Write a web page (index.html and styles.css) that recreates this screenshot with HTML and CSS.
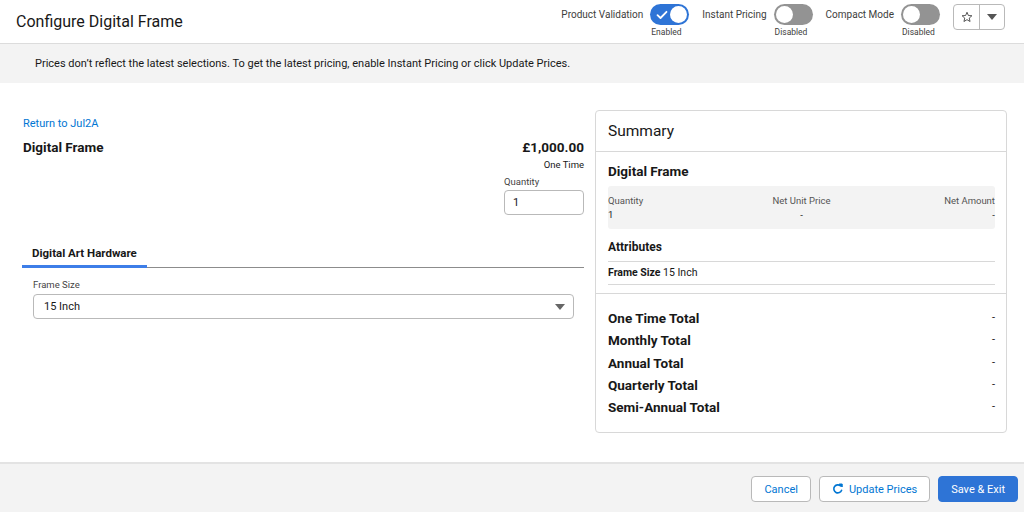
FILE: index.html
```html
<!DOCTYPE html>
<html lang="en">

<head>
    <meta charset="UTF-8">
    <meta name="viewport" content="width=device-width, initial-scale=1.0">
    <title>Configure Digital Frame</title>
    <link rel="stylesheet" href="styles.css">
</head>

<body>
    <div class="header">
        <div class="title">Configure Digital Frame</div>
        <div class="controls">
            <div class="opt">
                <span class="opt_label">Product Validation</span>
                <div class="opt_col">
                    <span class="toggle on">
                        <svg class="check" width="12" height="10" viewBox="0 0 12 10"><path d="M1.5 5.2 L4.5 8 L10.5 1.8" fill="none" stroke="#fff" stroke-width="1.8" stroke-linecap="round" stroke-linejoin="round"/></svg>
                        <span class="knob"></span>
                    </span>
                    <span class="opt_state">Enabled</span>
                </div>
            </div>
            <div class="opt">
                <span class="opt_label">Instant Pricing</span>
                <div class="opt_col">
                    <span class="toggle"><span class="knob"></span></span>
                    <span class="opt_state">Disabled</span>
                </div>
            </div>
            <div class="opt">
                <span class="opt_label">Compact Mode</span>
                <div class="opt_col">
                    <span class="toggle"><span class="knob"></span></span>
                    <span class="opt_state">Disabled</span>
                </div>
            </div>
            <div class="btn_group">
                <span class="icon_btn">
                    <svg width="12" height="12" viewBox="0 0 24 24"><path d="M12 2.5 L14.8 9 L21.8 9.5 L16.5 14.1 L18.1 21 L12 17.3 L5.9 21 L7.5 14.1 L2.2 9.5 L9.2 9 Z" fill="none" stroke="#444" stroke-width="1.8" stroke-linejoin="round"/></svg>
                </span>
                <span class="icon_btn">
                    <svg width="10" height="6" viewBox="0 0 10 6"><path d="M0 0 L10 0 L5 6 Z" fill="#555"/></svg>
                </span>
            </div>
        </div>
    </div>

    <div class="banner">Prices don’t reflect the latest selections. To get the latest pricing, enable Instant Pricing or click Update Prices.</div>

    <div class="main">
        <div class="left">
            <a class="back" href="#">Return to Jul2A</a>
            <div class="product">
                <div class="product_name">Digital Frame</div>
                <div class="product_price">
                    <div class="price">£1,000.00</div>
                    <div class="price_type">One Time</div>
                    <div class="qty_label">Quantity</div>
                    <div class="qty_input">1</div>
                </div>
            </div>
            <div class="tabs">
                <span class="tab active">Digital Art Hardware</span>
            </div>
            <div class="tab_panel">
                <div class="field_label">Frame Size</div>
                <div class="select">
                    <span>15 Inch</span>
                    <svg width="10" height="6" viewBox="0 0 10 6"><path d="M0 0 L10 0 L5 6 Z" fill="#666"/></svg>
                </div>
            </div>
        </div>

        <div class="card">
            <div class="card_head">Summary</div>
            <div class="card_body">
                <div class="sum_name">Digital Frame</div>
                <div class="sum_grid">
                    <div class="col">
                        <span class="col_label">Quantity</span>
                        <span class="col_val">1</span>
                    </div>
                    <div class="col center">
                        <span class="col_label">Net Unit Price</span>
                        <span class="col_val">-</span>
                    </div>
                    <div class="col right">
                        <span class="col_label">Net Amount</span>
                        <span class="col_val">-</span>
                    </div>
                </div>
                <div class="attr_title">Attributes</div>
                <div class="attr_row"><b>Frame Size</b> 15 Inch</div>
            </div>
            <div class="totals">
                <div class="total_row"><span>One Time Total</span><span class="dash">-</span></div>
                <div class="total_row"><span>Monthly Total</span><span class="dash">-</span></div>
                <div class="total_row"><span>Annual Total</span><span class="dash">-</span></div>
                <div class="total_row"><span>Quarterly Total</span><span class="dash">-</span></div>
                <div class="total_row"><span>Semi-Annual Total</span><span class="dash">-</span></div>
            </div>
        </div>
    </div>

    <div class="footer">
        <span class="btn">Cancel</span>
        <span class="btn">
            <svg width="12" height="12" viewBox="0 0 12 12"><path d="M9.6 7.2 A4 4 0 1 1 8.6 3" fill="none" stroke="#0176d3" stroke-width="1.6" stroke-linecap="round"/><path d="M7.2 1 L10.2 1 L10.2 4 Z" fill="#0176d3" stroke="#0176d3" stroke-width="1" stroke-linejoin="round"/></svg>
            Update Prices
        </span>
        <span class="btn brand">Save &amp; Exit</span>
    </div>
</body>

</html>
```

FILE: styles.css
```css
* {
    box-sizing: border-box;
}

body {
    margin: 0;
    font-family: Roboto, "Noto Sans", sans-serif;
    color: #181818;
    background: #fff;
}

.header {
    height: 44px;
    border-bottom: 1px solid #dcdcdc;
    display: flex;
    justify-content: space-between;
    padding: 0 19px 0 16px;
}

.title {
    font-size: 16px;
    line-height: 43px;
}

.controls {
    display: flex;
    align-items: flex-start;
    padding-top: 4px;
}

.opt {
    display: flex;
    align-items: flex-start;
    margin-right: 13px;
}

.opt_label {
    font-size: 10px;
    line-height: 21px;
    color: #3e3e3c;
    margin-right: 7px;
}

.opt_col {
    display: flex;
    flex-direction: column;
    align-items: flex-start;
}

.opt_state {
    font-size: 8.5px;
    color: #3e3e3c;
    margin-top: 2px;
    padding-left: 1px;
}

.toggle {
    width: 39px;
    height: 21px;
    border-radius: 11px;
    background: #939393;
    position: relative;
    display: block;
}

.toggle.on {
    background: #2e74d6;
}

.toggle .knob {
    position: absolute;
    top: 2px;
    left: 2px;
    width: 17px;
    height: 17px;
    border-radius: 50%;
    background: #fff;
}

.toggle.on .knob {
    left: 20px;
}

.toggle .check {
    position: absolute;
    left: 6px;
    top: 6px;
}

.btn_group {
    display: flex;
    border: 1px solid #b9b9b9;
    border-radius: 4px;
    height: 26px;
}

.icon_btn {
    width: 25px;
    display: flex;
    align-items: center;
    justify-content: center;
}

.icon_btn + .icon_btn {
    border-left: 1px solid #b9b9b9;
}

.banner {
    background: #f3f3f3;
    height: 39px;
    line-height: 39px;
    padding-left: 35px;
    font-size: 11px;
    color: #181818;
}

.main {
    height: 379px;
    display: flex;
    padding: 0 17px 0 23px;
}

.left {
    width: 561px;
    padding-top: 34px;
}

.back {
    display: block;
    font-size: 11px;
    color: #0176d3;
    text-decoration: none;
    line-height: 13px;
}

.product {
    display: flex;
    justify-content: space-between;
    margin-top: 9px;
}

.product_name {
    font-size: 13.5px;
    font-weight: 700;
    line-height: 16px;
}

.product_price {
    display: flex;
    flex-direction: column;
    align-items: flex-end;
}

.price {
    font-size: 13.5px;
    font-weight: 700;
    line-height: 16px;
}

.price_type {
    font-size: 9.5px;
    margin-top: 4px;
    line-height: 12px;
}

.qty_label {
    font-size: 9.5px;
    color: #444;
    margin-top: 5px;
    align-self: flex-start;
    line-height: 12px;
}

.qty_input {
    width: 80px;
    height: 25px;
    border: 1px solid #b9b9b9;
    border-radius: 4px;
    font-size: 11px;
    line-height: 23px;
    padding-left: 8px;
    margin-top: 2px;
}

.tabs {
    margin-top: 25px;
    border-bottom: 1px solid #8c8c8c;
    display: flex;
}

.tab {
    font-size: 11.5px;
    font-weight: 700;
    line-height: 14px;
    padding: 6px 10px 5px;
    border-bottom: 3px solid #3d7ee8;
    margin: 0 0 -1px -1px;
}

.tab_panel {
    padding: 11px 10px 0;
}

.field_label {
    font-size: 9.5px;
    color: #444;
    line-height: 12px;
}

.select {
    margin-top: 3px;
    height: 25px;
    border: 1px solid #b9b9b9;
    border-radius: 4px;
    display: flex;
    align-items: center;
    justify-content: space-between;
    padding: 0 8px 0 10px;
    font-size: 11px;
}

.card {
    width: 412px;
    height: 323px;
    margin: 27px 0 0 11px;
    border: 1px solid #d8d8d8;
    border-radius: 4px;
}

.card_head {
    height: 41px;
    border-bottom: 1px solid #d8d8d8;
    font-size: 15.5px;
    line-height: 40px;
    padding-left: 12px;
}

.card_body {
    padding: 11px 11px 0 12px;
    border-bottom: 1px solid #d8d8d8;
    height: 142px;
}

.sum_name {
    font-size: 13.5px;
    font-weight: 700;
    line-height: 16px;
}

.sum_grid {
    margin-top: 7px;
    background: #f3f3f3;
    border-radius: 3px;
    display: flex;
    justify-content: space-between;
    height: 43px;
    padding-top: 8px;
}

.col {
    display: flex;
    flex-direction: column;
    font-size: 9.5px;
    line-height: 14px;
    width: 33%;
}

.col.center {
    align-items: center;
}

.col.right {
    align-items: flex-end;
}

.col_label {
    color: #555;
}

.attr_title {
    font-size: 12px;
    font-weight: 700;
    margin-top: 11px;
    line-height: 15px;
    padding-bottom: 6px;
    border-bottom: 1px solid #d8d8d8;
}

.attr_row {
    font-size: 10.5px;
    line-height: 14px;
    padding: 4px 0 4px;
    border-bottom: 1px solid #d8d8d8;
}

.totals {
    padding: 13px 11px 0 12px;
}

.total_row {
    display: flex;
    justify-content: space-between;
    font-size: 13.5px;
    font-weight: 700;
    line-height: 22.3px;
}

.total_row .dash {
    font-weight: 400;
    font-size: 11px;
}

.footer {
    height: 50px;
    border-top: 2px solid #e3e3e3;
    background: #f3f3f3;
    display: flex;
    justify-content: flex-end;
    align-items: center;
    padding: 2px 6px 0 0;
    gap: 8px;
}

.btn {
    height: 26px;
    border: 1px solid #b9b9b9;
    border-radius: 4px;
    background: #fff;
    color: #0176d3;
    font-size: 11px;
    display: flex;
    align-items: center;
    padding: 0 12px;
    gap: 5px;
}

.btn.brand {
    background: #2e74d6;
    border-color: #2e74d6;
    color: #fff;
}
```
